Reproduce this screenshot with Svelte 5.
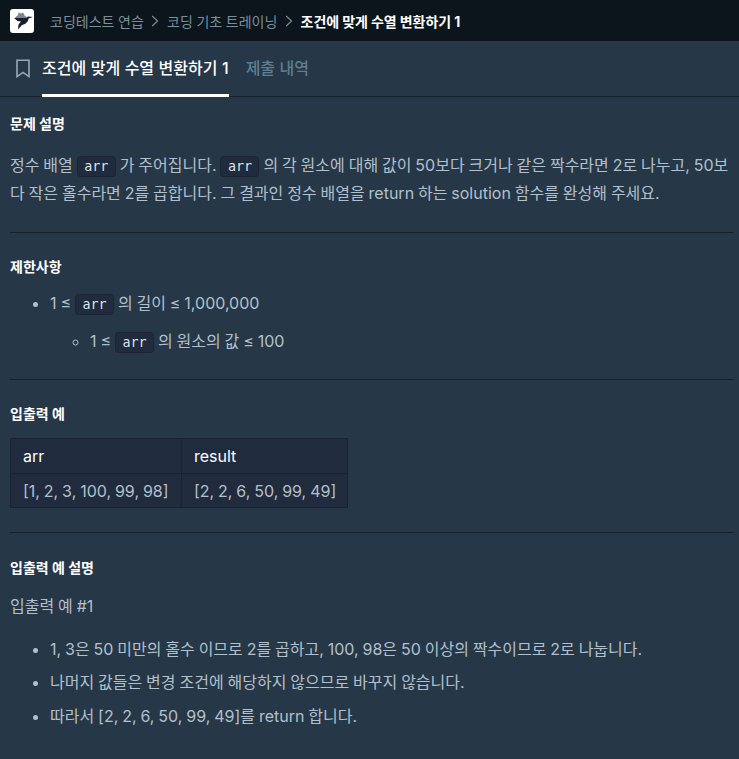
<script lang="ts">
  const crumbs = ['코딩테스트 연습', '코딩 기초 트레이닝'];
  const current = '조건에 맞게 수열 변환하기 1';
  const notes = [
    '1, 3은 50 미만의 홀수 이므로 2를 곱하고, 100, 98은 50 이상의 짝수이므로 2로 나눕니다.',
    '나머지 값들은 변경 조건에 해당하지 않으므로 바꾸지 않습니다.',
    '따라서 [2, 2, 6, 50, 99, 49]를 return 합니다.',
  ];
</script>

<div class="page">
  <header class="topbar">
    <div class="logo">
      <svg width="24" height="24" viewBox="0 0 24 24">
        <path d="M5 8.5 L8 6 L8.5 3.5 L11 4.5 L13 3.5 L15 7 L17 8 L16 10 L8 10 Z" fill="#7d8791" />
        <path d="M4 9 L16 9 L18 7.5 L23 8 L18.5 9.5 L18 12 L15 15 L12 16 L8 20.5 L8.5 15.5 L11 12.5 L7.5 12 Z" fill="#17202b" />
      </svg>
    </div>
    <nav class="crumbs">
      {#each crumbs as c}
        <span class="crumb">{c}</span>
        <svg class="chev" width="8" height="12" viewBox="0 0 8 12"><path d="M1.2 1 L6.6 6 L1.2 11" fill="none" stroke="#78909c" stroke-width="1.1" /></svg>
      {/each}
      <span class="crumb-current">{current}</span>
    </nav>
  </header>

  <div class="tabs">
    <svg class="bookmark" width="16" height="19" viewBox="0 0 16 19"><path d="M2 1.2 H14 V17.6 L8 13.4 L2 17.6 Z" fill="none" stroke="#98a8b9" stroke-width="1.6" /></svg>
    <div class="tab active">{current}</div>
    <div class="tab">제출 내역</div>
  </div>

  <main class="content">
    <h6 class="first">문제 설명</h6>
    <p class="desc">정수 배열 <code>arr</code> 가 주어집니다. <code>arr</code> 의 각 원소에 대해 값이 50보다 크거나 같은 짝수라면 2로 나누고, 50보다 작은 홀수라면 2를 곱합니다. 그 결과인 정수 배열을 return 하는 solution 함수를 완성해 주세요.</p>
    <hr />

    <h6>제한사항</h6>
    <ul class="limits">
      <li>
        1 ≤ <code>arr</code> 의 길이 ≤ 1,000,000
        <ul>
          <li>1 ≤ <code>arr</code> 의 원소의 값 ≤ 100</li>
        </ul>
      </li>
    </ul>
    <hr />

    <h6>입출력 예</h6>
    <table>
      <thead>
        <tr><th class="c1">arr</th><th class="c2">result</th></tr>
      </thead>
      <tbody>
        <tr><td>[1, 2, 3, 100, 99, 98]</td><td>[2, 2, 6, 50, 99, 49]</td></tr>
      </tbody>
    </table>
    <hr />

    <h6 class="last">입출력 예 설명</h6>
    <p class="sample">입출력 예 #1</p>
    <ul class="notes">
      {#each notes as n}
        <li>{n}</li>
      {/each}
    </ul>
  </main>
</div>

<style>
  :global(body) {
    margin: 0;
    background: #263747;
  }

  .page {
    width: 739px;
    height: 759px;
    overflow: hidden;
    background: #263747;
    color: #b2c0cc;
    font-family: Inter, "Noto Sans CJK KR", sans-serif;
    font-size: 16px;
    word-spacing: -0.6px;
  }

  .topbar {
    height: 41px;
    background: #0c151c;
    display: flex;
    align-items: center;
    padding-left: 10px;
    box-sizing: border-box;
  }

  .logo {
    width: 24px;
    height: 24px;
    background: #fff;
    border-radius: 3px;
    margin-right: 16px;
  }

  .logo svg {
    display: block;
  }

  .crumbs {
    display: flex;
    align-items: center;
    gap: 7.6px;
    font-size: 14px;
    word-spacing: -0.3px;
  }

  .crumb {
    color: #78909c;
  }

  .crumb-current {
    color: #fff;
    font-weight: 700;
  }

  .tabs {
    height: 56px;
    display: flex;
    align-items: stretch;
    border-bottom: 1px solid #172029;
    box-sizing: border-box;
    padding-left: 15px;
  }

  .bookmark {
    align-self: center;
    margin-right: 11px;
    margin-top: -1px;
  }

  .tab {
    color: #5f7f90;
    font-size: 16px;
    font-weight: 500;
    line-height: 54px;
    margin-right: 17px;
    height: 56px;
    box-sizing: border-box;
    word-spacing: 0.25px;
  }

  .tab.active {
    color: #fff;
    border-bottom: 3px solid #fff;
  }

  .content {
    padding: 0 6px 0 10px;
  }

  h6 {
    margin: 0;
    color: #fff;
    font-size: 14px;
    font-weight: 700;
    line-height: 20px;
    padding-top: 24px;
    word-spacing: 0;
  }

  h6.first {
    padding-top: 17px;
  }

  h6.last {
    padding-top: 25px;
  }

  p {
    margin: 0;
    line-height: 27.2px;
  }

  .desc {
    margin-top: 17px;
    line-height: 28px;
    word-break: break-all;
  }

  hr {
    border: none;
    border-top: 1px solid #172029;
    margin: 0;
  }

  .desc + hr {
    margin-top: 25px;
  }

  code {
    font-family: "DejaVu Sans Mono", "Liberation Mono", monospace;
    font-size: 13.33px;
    line-height: 1;
    color: #dfe6ec;
    background: #202b3d;
    border: 1px solid #1b2535;
    border-radius: 4px;
    padding: 2px 6.5px;
    word-spacing: 0;
  }

  ul {
    margin: 0;
    padding-left: 40px;
  }

  li {
    line-height: 27.2px;
  }

  .limits {
    margin-top: 13px;
    padding-bottom: 24px;
  }

  .limits ul {
    margin-top: 11px;
    list-style: circle;
  }

  table {
    border-collapse: collapse;
    margin: 14px 0 24px;
    background: #202b3d;
    font-size: 16px;
    table-layout: fixed;
    width: 338px;
  }

  th,
  td {
    border: 1px solid #172334;
    padding: 0 12px;
    text-align: left;
    font-weight: 400;
    height: 34px;
    box-sizing: border-box;
    white-space: nowrap;
  }

  th {
    color: #fff;
    height: 35px;
    padding-bottom: 1px;
  }

  .c1 {
    width: 171px;
  }

  .sample {
    margin-top: 15px;
  }

  .notes {
    margin-top: 15px;
  }

  .notes li + li {
    margin-top: 6.4px;
  }
</style>
